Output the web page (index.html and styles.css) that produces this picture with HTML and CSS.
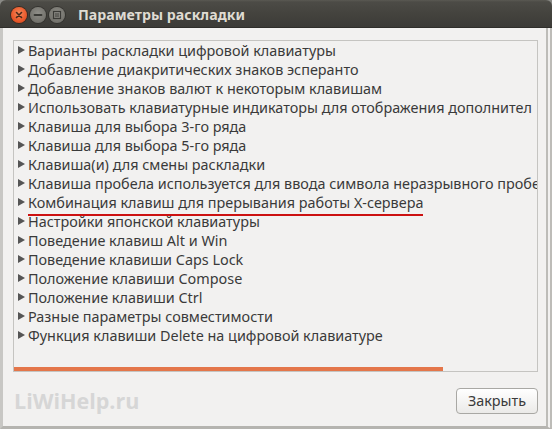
FILE: index.html
```html
<!DOCTYPE html>
<html lang="ru">
<head>
<meta charset="utf-8">
<link rel="stylesheet" href="styles.css">
</head>
<body>
<div class="window">
  <div class="titlebar">
    <div class="controls">
      <span class="btn close"><svg width="16" height="16" viewBox="0 0 16 16"><path d="M5.5 5.5l5 5M10.5 5.5l-5 5" stroke="#4a2a1a" stroke-width="1.6" stroke-linecap="round"/></svg></span>
      <span class="btn min"><svg width="16" height="16" viewBox="0 0 16 16"><path d="M4.5 8h7" stroke="#3a3a36" stroke-width="1.8" stroke-linecap="round"/></svg></span>
      <span class="btn max"><svg width="16" height="16" viewBox="0 0 16 16"><rect x="4.5" y="4.5" width="7" height="7" fill="none" stroke="#3a3a36" stroke-width="1.2"/><path d="M6 7h4M6 9h4" stroke="#3a3a36" stroke-width="1"/></svg></span>
    </div>
    <div class="title">Параметры раскладки</div>
  </div>
  <div class="content">
    <div class="listbox">
      <ul class="tree">
        <li>Варианты раскладки цифровой клавиатуры</li>
        <li>Добавление диакритических знаков эсперанто</li>
        <li>Добавление знаков валют к некоторым клавишам</li>
        <li>Использовать клавиатурные индикаторы для отображения дополнител</li>
        <li>Клавиша для выбора 3-го ряда</li>
        <li>Клавиша для выбора 5-го ряда</li>
        <li>Клавиша(и) для смены раскладки</li>
        <li>Клавиша пробела используется для ввода символа неразрывного пробе</li>
        <li class="marked"><span class="underline">Комбинация клавиш для прерывания работы X-сервера</span></li>
        <li>Настройки японской клавиатуры</li>
        <li>Поведение клавиш Alt и Win</li>
        <li>Поведение клавиши Caps Lock</li>
        <li>Положение клавиши Compose</li>
        <li>Положение клавиши Ctrl</li>
        <li>Разные параметры совместимости</li>
        <li>Функция клавиши Delete на цифровой клавиатуре</li>
      </ul>
      <div class="scrollbar"><div class="thumb"></div></div>
    </div>
    <div class="footer">
      <div class="watermark">LiWiHelp.ru</div>
      <button class="close-btn">Закрыть</button>
    </div>
  </div>
</div>
</body>
</html>
```
FILE: styles.css
```css
html, body {
  margin: 0;
  padding: 0;
  width: 552px;
  height: 429px;
  overflow: hidden;
  background: #8a8a86;
}
.window {
  width: 552px;
  height: 429px;
  box-sizing: border-box;
  display: flex;
  flex-direction: column;
  font-family: "Noto Sans", "DejaVu Sans", sans-serif;
  border-radius: 6px 6px 0 0;
  overflow: hidden;
}
.titlebar {
  height: 28px;
  flex: none;
  display: flex;
  align-items: center;
  background: linear-gradient(#5a5953 0, #4c4b46 2px, #44433e 50%, #3c3b37 100%);
  border-bottom: 1px solid #2f2e2b;
  box-sizing: border-box;
}
.controls {
  display: flex;
  gap: 3px;
  margin-left: 11px;
  margin-top: 2px;
}
.btn {
  width: 16px;
  height: 16px;
  border-radius: 50%;
  display: flex;
  align-items: center;
  justify-content: center;
}
.btn svg { display: block; }
.close {
  background: radial-gradient(circle at 50% 40%, #f58a5c 0, #e9582a 60%, #c8431c 100%);
  box-shadow: 0 0 0 1px #3a2a20;
}
.min, .max {
  background: radial-gradient(circle at 50% 40%, #8f8e88 0, #73726c 70%, #5e5d58 100%);
  box-shadow: 0 0 0 1px #34332f;
}
.title {
  margin-left: 13px;
  color: #dfdbd2;
  font-weight: bold;
  font-size: 14.2px;
  margin-top: 1px;
}
.content {
  flex: 1;
  background: #f2f1f0;
  border-left: 3px solid #c8c7c4;
  border-right: 6px double #bdbcb8;
  border-bottom: 3px solid #b5b4b0;
  padding: 12px 1px 0 10px;
  display: flex;
  flex-direction: column;
}
.listbox {
  width: 525px;
  height: 332px;
  border: 1px solid #c5c4c1;
  background: #f2f1f0;
  position: relative;
  overflow: hidden;
  box-sizing: border-box;
}
.tree {
  list-style: none;
  margin: 0;
  padding: 0;
}
.tree li {
  height: 19px;
  line-height: 19px;
  font-size: 14.4px;
  color: #3a3a3a;
  white-space: nowrap;
  padding-left: 14px;
  position: relative;
}
.tree li::before {
  content: "";
  position: absolute;
  left: 4px;
  top: 5px;
  border-left: 7px solid #555;
  border-top: 4.5px solid transparent;
  border-bottom: 4.5px solid transparent;
}
.underline {
  position: relative;
}
.underline::after {
  content: "";
  position: absolute;
  left: 0;
  right: 0;
  bottom: -4px;
  height: 2px;
  background: #cc1111;
}
.scrollbar {
  position: absolute;
  left: 0;
  right: 0;
  bottom: 0;
  height: 4px;
}
.thumb {
  width: 429px;
  height: 4px;
  background: #e4764a;
}
.footer {
  display: flex;
  align-items: center;
  justify-content: space-between;
  margin-top: 14px;
}
.watermark {
  font-family: "Open Sans", "Noto Sans", sans-serif;
  font-weight: bold;
  font-size: 21.5px;
  color: #d6d6d6;
  margin-left: 1px;
}
.close-btn {
  font-family: "Noto Sans", sans-serif;
  font-size: 14.4px;
  color: #3a3a3a;
  width: 82px;
  height: 26px;
  border: 1px solid #a9a8a4;
  border-radius: 4px;
  background: linear-gradient(#ffffff, #ebeae8);
  box-shadow: 0 1px 0 #ffffff inset;
  padding: 0;
  margin-right: 7px;
}
```
